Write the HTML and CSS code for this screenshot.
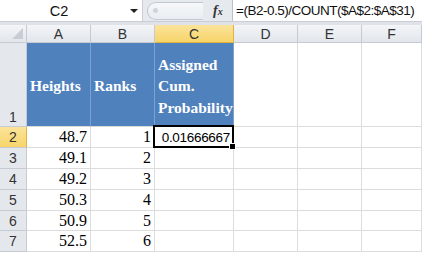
FILE: index.html
```html
<!DOCTYPE html>
<html lang="en">
<head>
  <meta charset="UTF-8">
  <title>Heights - Cumulative Probability</title>
  <link rel="stylesheet" href="styles.css">
</head>
<body>
  <div class="formula-bar">
    <div class="name-box">
      <span class="name-value">C2</span>
      <span class="name-arrow"></span>
    </div>
    <div class="bar-tools">
      <div class="tool-pill"><span class="pill-dot"></span></div>
      <span class="fx">f<small>x</small></span>
    </div>
    <div class="formula-input">=(B2-0.5)/COUNT($A$2:$A$31)</div>
  </div>
  <div class="strip"></div>

  <div class="sheet">
    <!-- column headers -->
    <div class="corner"><span class="corner-tri"></span></div>
    <div class="col-head">A</div>
    <div class="col-head">B</div>
    <div class="col-head active">C</div>
    <div class="col-head">D</div>
    <div class="col-head">E</div>
    <div class="col-head">F</div>

    <!-- row 1 -->
    <div class="row-head bottom">1</div>
    <div class="cell title">Heights</div>
    <div class="cell title">Ranks</div>
    <div class="cell title">Assigned<br>Cum.<br>Probability</div>
    <div class="cell"></div>
    <div class="cell"></div>
    <div class="cell"></div>

    <!-- row 2 -->
    <div class="row-head active">2</div>
    <div class="cell num">48.7</div>
    <div class="cell num">1</div>
    <div class="cell calc selected">0.01666667</div>
    <div class="cell"></div>
    <div class="cell"></div>
    <div class="cell"></div>

    <div class="row-head">3</div>
    <div class="cell num">49.1</div>
    <div class="cell num">2</div>
    <div class="cell"></div>
    <div class="cell"></div>
    <div class="cell"></div>
    <div class="cell"></div>

    <div class="row-head">4</div>
    <div class="cell num">49.2</div>
    <div class="cell num">3</div>
    <div class="cell"></div>
    <div class="cell"></div>
    <div class="cell"></div>
    <div class="cell"></div>

    <div class="row-head">5</div>
    <div class="cell num">50.3</div>
    <div class="cell num">4</div>
    <div class="cell"></div>
    <div class="cell"></div>
    <div class="cell"></div>
    <div class="cell"></div>

    <div class="row-head">6</div>
    <div class="cell num">50.9</div>
    <div class="cell num">5</div>
    <div class="cell"></div>
    <div class="cell"></div>
    <div class="cell"></div>
    <div class="cell"></div>

    <div class="row-head">7</div>
    <div class="cell num">52.5</div>
    <div class="cell num">6</div>
    <div class="cell"></div>
    <div class="cell"></div>
    <div class="cell"></div>
    <div class="cell"></div>
  </div>
</body>
</html>
```

FILE: styles.css
```css
body {
  margin: 0;
  padding: 0;
  width: 422px;
  height: 254px;
  overflow: hidden;
  background: #fff;
  font-family: "Liberation Sans", Arial, sans-serif;
}
.formula-bar {
  display: flex;
  height: 22px;
  background: #fff;
  border-bottom: 1px solid #c9ced6;
  box-sizing: border-box;
}
.name-box {
  width: 143px;
  display: flex;
  align-items: center;
  border-right: 1px solid #c9ced6;
  box-sizing: border-box;
}
.name-value {
  flex: 1;
  text-align: center;
  font-size: 14.5px;
  color: #111;
  padding-right: 12px;
}
.name-arrow {
  width: 0;
  height: 0;
  margin-right: 4px;
  border-left: 4px solid transparent;
  border-right: 4px solid transparent;
  border-top: 4px solid #222;
}
.bar-tools {
  width: 90px;
  display: flex;
  align-items: center;
  background: #e6eaef;
  border-right: 1px solid #b9c0c9;
  box-sizing: border-box;
  padding-left: 4px;
}
.tool-pill {
  width: 56px;
  height: 18px;
  border: 1px solid #c3c9d1;
  border-right: none;
  border-radius: 9px 0 0 9px;
  background: linear-gradient(#f6f8fa, #e9edf1);
  display: flex;
  align-items: center;
  padding-left: 5px;
  box-sizing: border-box;
}
.pill-dot {
  width: 5px;
  height: 5px;
  border-radius: 50%;
  background: #cfd5dc;
}
.fx {
  margin-left: 10px;
  font-family: "Liberation Serif", serif;
  font-style: italic;
  font-weight: bold;
  font-size: 14px;
  color: #333;
}
.fx small {
  font-size: 10px;
}
.formula-input {
  flex: 1;
  padding-left: 3px;
  font-size: 13.5px;
  letter-spacing: -0.5px;
  line-height: 21px;
  color: #111;
  white-space: nowrap;
}
.strip {
  height: 3px;
  background: #dfe3e8;
}
.sheet {
  display: grid;
  grid-template-columns: 27px 64px 64px 79px 64px 64px 60px;
  grid-template-rows: 18px 84px 21px 21px 21px 21px 20px 21px;
}
.corner, .col-head, .row-head {
  background: linear-gradient(#f3f5f8, #e2e6eb);
  border-right: 1px solid #c5cbd3;
  border-bottom: 1px solid #c5cbd3;
  box-sizing: border-box;
  font-size: 14px;
  color: #333;
}
.corner {
  position: relative;
}
.corner-tri {
  position: absolute;
  right: 3px;
  bottom: 3px;
  width: 0;
  height: 0;
  border-left: 11px solid transparent;
  border-bottom: 11px solid #c8cdd3;
}
.col-head {
  display: flex;
  align-items: center;
  justify-content: center;
}
.col-head.active {
  background: linear-gradient(#fbe39a, #f7d56a);
  border-bottom: 1px solid #e2b13f;
  border-right: 1px solid #e2b13f;
}
.row-head {
  display: flex;
  align-items: center;
  justify-content: center;
  background: #e4e8ed;
}
.row-head.bottom {
  align-items: flex-end;
  padding-bottom: 1px;
}
.row-head.active {
  background: linear-gradient(#fbe39a, #f7d56a);
  border-right: 1px solid #e2b13f;
}
.cell {
  border-right: 1px solid #dcdcdc;
  border-bottom: 1px solid #dcdcdc;
  box-sizing: border-box;
  font-family: "Liberation Serif", "Times New Roman", serif;
  font-size: 16px;
  color: #000;
  display: flex;
  align-items: center;
}
.title {
  background: #4f81bd;
  color: #fff;
  font-weight: bold;
  font-size: 15.5px;
  line-height: 21.5px;
  padding-left: 3px;
  padding-top: 3px;
  border-right: 1px solid #7fa1cf;
  border-bottom: 1px solid #d9d9d9;
}
.num {
  justify-content: flex-end;
  padding-right: 3px;
}
.calc {
  justify-content: flex-end;
  padding-right: 3px;
  font-family: "Liberation Sans", Arial, sans-serif;
  font-size: 13.5px;
  letter-spacing: -0.3px;
}
.selected {
  position: relative;
}
.selected::after {
  content: "";
  position: absolute;
  left: -2px;
  top: -2px;
  right: -1px;
  bottom: -1px;
  border: 2px solid #000;
}
.selected::before {
  content: "";
  position: absolute;
  right: -3px;
  bottom: -3px;
  width: 5px;
  height: 5px;
  background: #000;
  border: 1px solid #fff;
  z-index: 1;
}
```
